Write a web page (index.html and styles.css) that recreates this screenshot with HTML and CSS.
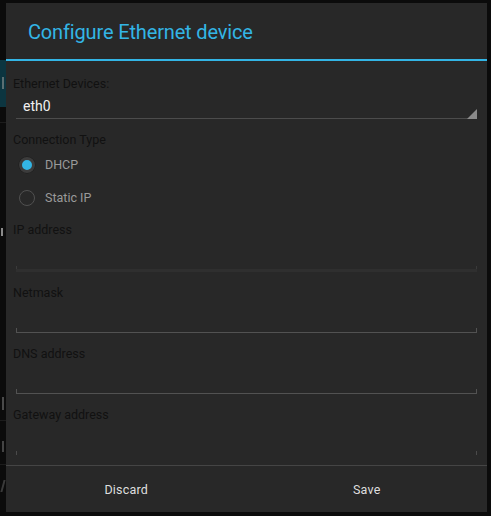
FILE: index.html
```html
<!DOCTYPE html>
<html>
<head>
<meta charset="utf-8">
<link rel="stylesheet" href="styles.css">
</head>
<body>
<div class="frame">
  <div class="backdrop">
    <div class="bg-tab"><span class="bar tab-bar"></span></div>
    <span class="bar b1"></span>
    <span class="bar b2"></span>
    <span class="bar b3"></span>
    <span class="bar b4"></span>
    <span class="rule r1"></span>
    <span class="rule r2"></span>
    <span class="rule r3"></span>
  </div>
  <div class="dialog">
    <div class="title">Configure Ethernet device</div>
    <div class="content">
      <div class="label first">Ethernet Devices:</div>
      <div class="spinner">eth0</div>
      <div class="label ctype">Connection Type</div>
      <div class="radio-row">
        <span class="radio checked"></span>
        <span class="radio-text">DHCP</span>
      </div>
      <div class="radio-row">
        <span class="radio"></span>
        <span class="radio-text">Static IP</span>
      </div>
      <div class="field first-field">
        <div class="label">IP address</div>
        <div class="input focused"></div>
      </div>
      <div class="field">
        <div class="label">Netmask</div>
        <div class="input"></div>
      </div>
      <div class="field">
        <div class="label">DNS address</div>
        <div class="input"></div>
      </div>
      <div class="field">
        <div class="label">Gateway address</div>
        <div class="input ticks-only"></div>
      </div>
    </div>
    <div class="buttons">
      <div class="btn">Discard</div>
      <div class="btn">Save</div>
    </div>
  </div>
</div>
</body>
</html>
```
FILE: styles.css
```css
html, body {
  margin: 0;
  padding: 0;
  background: #ffffff;
}
body {
  width: 492px;
  height: 520px;
  overflow: hidden;
  font-family: Roboto, "Noto Sans", sans-serif;
}
.frame {
  position: relative;
  width: 491px;
  height: 516px;
  background: #0b0b0b;
  padding: 3px 4px 0 6px;
  box-sizing: border-box;
}
.backdrop {
  position: absolute;
  left: 0;
  top: 0;
  width: 6px;
  height: 516px;
  overflow: hidden;
}
.bg-tab {
  position: absolute;
  left: 0;
  top: 60px;
  width: 6px;
  height: 47px;
  background: #0c3540;
}
.bar {
  position: absolute;
  width: 2px;
  background: #555;
}
.tab-bar { left: 2px; top: 17px; height: 12px; background: #5a6e72; }
.b1 { left: 1px; top: 228px; height: 8px; background: #8a8a8a; }
.b2 { left: 2px; top: 397px; height: 13px; background: #4a4a4a; }
.b3 { left: 2px; top: 441px; height: 11px; background: #444; }
.b4 { left: 2px; top: 480px; height: 12px; width: 2px; background: #3a3a3a; transform: skewX(-15deg); }
.rule {
  position: absolute;
  left: 0;
  width: 6px;
  height: 1px;
  background: #1c1c1c;
}
.r1 { top: 122px; }
.r2 { top: 420px; }
.r3 { top: 464px; }

.dialog {
  position: relative;
  width: 481px;
  height: 509px;
  background: #282828;
  display: flex;
  flex-direction: column;
}
.title {
  box-sizing: content-box;
  padding: 3px 0 0 22px;
  height: 53px;
  line-height: 53px;
  font-size: 20px;
  color: #33b5e5;
  border-bottom: 2px solid #33b5e5;
  letter-spacing: -0.15px;
}
.content {
  height: 404px;
  overflow: hidden;
  padding: 0 10px 0 7px;
}
.label {
  font-size: 12.5px;
  line-height: 16px;
  height: 16px;
  color: #111111;
  white-space: nowrap;
}
.label.first {
  margin-top: 15px;
}
.spinner {
  position: relative;
  margin-left: 3px;
  box-sizing: border-box;
  padding: 6px 0 0 7px;
  font-size: 14px;
  line-height: 16px;
  color: #f0f0f0;
  border-bottom: 1px solid #4c4c4c;
  height: 27px;
}
.spinner::after {
  content: "";
  position: absolute;
  right: 0;
  bottom: -1px;
  width: 10px;
  height: 10px;
  background: #8a8a8a;
  clip-path: polygon(100% 0, 100% 100%, 0 100%);
}
.label.ctype {
  margin-top: 13px;
}
.radio-row {
  height: 33px;
  display: flex;
  align-items: center;
  padding-left: 6px;
}
.radio {
  width: 16px;
  height: 16px;
  border-radius: 50%;
  box-sizing: border-box;
  border: 1.5px solid #505050;
  margin-right: 10px;
  flex: none;
}
.radio.checked {
  border: 3px solid #3c3c3c;
  background: #33b5e5;
  box-shadow: 0 0 0 0.5px #1c1c1c;
}
.radio-text {
  font-size: 12.5px;
  line-height: 16px;
  color: #9a9a9a;
}
.field {
  margin-bottom: 13px;
}
.field.first-field {
  margin-top: 8px;
}
.input {
  margin-left: 3px;
  height: 32px;
  box-sizing: border-box;
  border-bottom: 1px solid #525252;
  background:
    linear-gradient(#525252, #525252) left bottom / 1px 4px no-repeat,
    linear-gradient(#525252, #525252) right bottom / 1px 4px no-repeat;
}
.input.focused {
  height: 34px;
  border-bottom: 3px solid #2f2f2f;
  background:
    linear-gradient(#3a3a3a, #3a3a3a) left bottom / 1px 3px no-repeat,
    linear-gradient(#3a3a3a, #3a3a3a) right bottom / 1px 3px no-repeat;
}
.input.ticks-only {
  border-bottom-color: transparent;
  height: 33px;
  background:
    linear-gradient(#4a4a4a, #4a4a4a) left bottom / 1px 4px no-repeat,
    linear-gradient(#4a4a4a, #4a4a4a) right bottom / 1px 4px no-repeat;
}
.buttons {
  border-top: 1px solid #454545;
  height: 46px;
  display: flex;
}
.btn {
  flex: 1;
  display: flex;
  align-items: center;
  justify-content: center;
  font-size: 12.5px;
  color: #dedede;
  letter-spacing: 0.2px;
}
```
